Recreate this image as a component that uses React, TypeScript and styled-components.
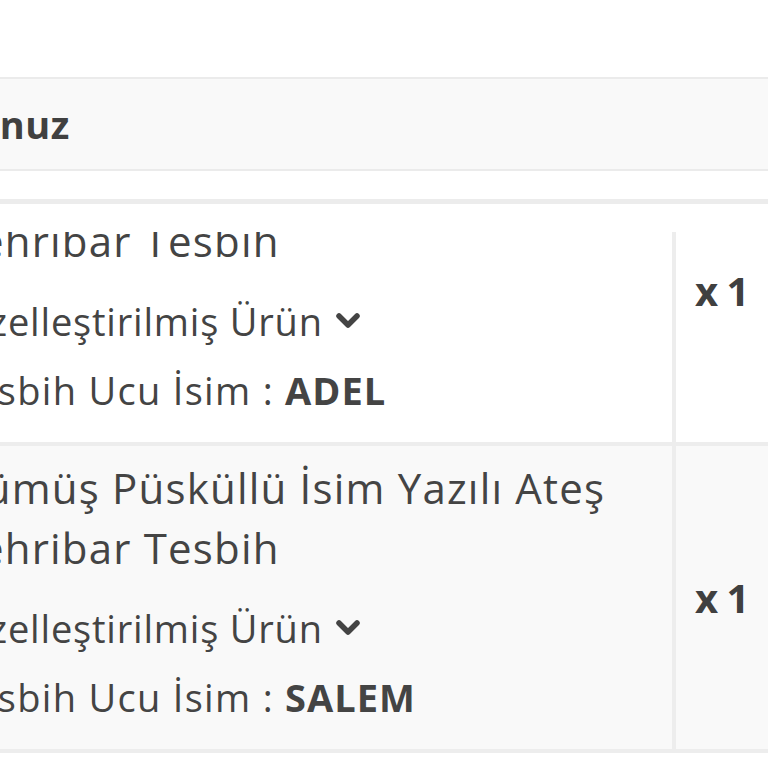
import React from "react";
import styled, { createGlobalStyle } from "styled-components";

const GlobalStyle = createGlobalStyle`
  html, body {
    margin: 0;
    padding: 0;
    background: #ffffff;
  }
  body {
    font-family: "Open Sans", "Noto Sans", sans-serif;
    color: #444444;
  }
`;

const Page = styled.div`
  width: 768px;
  height: 768px;
  overflow: hidden;
  background: #ffffff;
`;

const Shifted = styled.div`
  margin-left: -47px;
  padding-top: 77px;
`;

const TitleBar = styled.div`
  height: 90px;
  display: flex;
  align-items: center;
  background: #f9f9f9;
  border-top: 2px solid #ebebeb;
  border-bottom: 2px solid #ebebeb;
`;

const TitleText = styled.h2`
  margin: 0 0 0 -255px;
  font-size: 38px;
  font-weight: 700;
  letter-spacing: 0.5px;
  color: #404040;
  white-space: nowrap;
`;

const Gap = styled.div`
  height: 28px;
`;

const Card = styled.div`
  border-top: 5px solid #ececec;
  padding-top: 28px;
`;

const Viewport = styled.div`
  height: 600px;
  overflow: hidden;
`;

const Row = styled.div<{ $shade?: boolean; $first?: boolean }>`
  display: grid;
  grid-template-columns: 723px 1fr;
  height: 303px;
  margin-top: ${({ $first }) => ($first ? "-93px" : "0")};
  background: ${({ $shade }) => ($shade ? "#f9f9f9" : "#ffffff")};
  border-bottom: 4px solid #ededed;
`;

const NameCell = styled.div`
  border-right: 4px solid #ededed;
  padding-top: 12px;
`;

const ProductName = styled.div`
  font-size: 42px;
  line-height: 60px;
  letter-spacing: 1.2px;
  color: #444444;
`;

const Custom = styled.div`
  margin: 20px 0 0 6px;
  font-size: 38px;
  line-height: 60px;
  letter-spacing: 0.8px;
  display: flex;
  align-items: center;
  gap: 12px;
`;

const Option = styled.div`
  margin-top: 9px;
  font-size: 38px;
  line-height: 60px;
  letter-spacing: 1.3px;

  b {
    font-weight: 700;
    letter-spacing: 1px;
  }
`;

const QtyCell = styled.div`
  display: flex;
  align-items: center;
  padding-left: 19px;
  font-size: 40px;
  font-weight: 700;
  color: #404040;
  word-spacing: -2px;
`;

const Chevron = () => (
  <svg width="26" height="18" viewBox="0 0 26 18">
    <polyline
      points="4,4 13,13 22,4"
      fill="none"
      stroke="#444"
      strokeWidth="5.5"
      strokeLinecap="round"
      strokeLinejoin="round"
    />
  </svg>
);

const items = [
  { engraving: "ADEL" },
  { engraving: "SALEM" },
];

const App = () => {
  return (
    <Page>
      <GlobalStyle />
      <Shifted>
        <TitleBar>
          <TitleText>Sipariş Durumunuz</TitleText>
        </TitleBar>
        <Gap />
        <Card>
          <Viewport>
            {items.map((item, i) => (
              <Row key={i} $first={i === 0} $shade={i % 2 === 1}>
                <NameCell>
                  <ProductName>
                    Gümüş Püsküllü İsim Yazılı Ateş
                    <br />
                    Kehribar Tesbih
                  </ProductName>
                  <Custom>
                    Özelleştirilmiş Ürün <Chevron />
                  </Custom>
                  <Option>
                    Tesbih Ucu İsim : <b>{item.engraving}</b>
                  </Option>
                </NameCell>
                <QtyCell>x 1</QtyCell>
              </Row>
            ))}
          </Viewport>
        </Card>
      </Shifted>
    </Page>
  );
};

export default App;
